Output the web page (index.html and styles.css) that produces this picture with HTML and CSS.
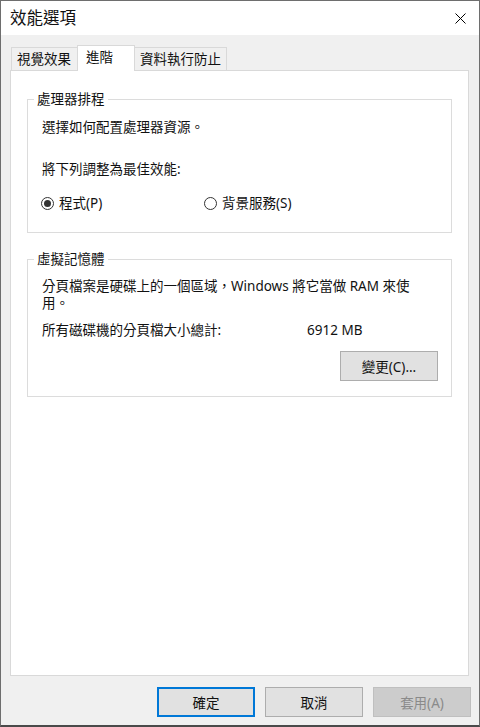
FILE: index.html
```html
<!DOCTYPE html>
<html lang="zh-TW">
<head>
    <meta charset="UTF-8">
    <meta name="viewport" content="width=device-width, initial-scale=1.0">
    <title>效能選項</title>
    <link rel="stylesheet" href="styles.css">
</head>
<body>
    <div class="window">
        <header class="titlebar">
            <div class="title">效能選項</div>
            <button class="close-btn" aria-label="關閉">
                <svg width="11" height="11" viewBox="0 0 11 11">
                    <path d="M0.5 0.5 L10.5 10.5 M10.5 0.5 L0.5 10.5" stroke="#000" stroke-width="1" fill="none"/>
                </svg>
            </button>
        </header>

        <div class="dialog-body">
            <div class="tabs">
                <div class="tab tab-first">視覺效果</div>
                <div class="tab tab-active">進階</div>
                <div class="tab tab-last">資料執行防止</div>
            </div>

            <div class="tab-panel">
                <fieldset class="group group-first">
                    <legend>處理器排程</legend>
                    <div class="group-content">
                        <p class="line intro">選擇如何配置處理器資源。</p>
                        <p class="line hint">將下列調整為最佳效能:</p>
                        <div class="radio-row">
                            <label class="radio-item radio-wide">
                                <span class="radio checked"></span>
                                <span>程式(P)</span>
                            </label>
                            <label class="radio-item">
                                <span class="radio"></span>
                                <span>背景服務(S)</span>
                            </label>
                        </div>
                    </div>
                </fieldset>

                <fieldset class="group group-memory">
                    <legend>虛擬記憶體</legend>
                    <div class="group-content">
                        <p class="paragraph">分頁檔案是硬碟上的一個區域，Windows 將它當做 RAM 來使<br>用。</p>
                        <div class="size-row">
                            <span class="size-label">所有磁碟機的分頁檔大小總計:</span>
                            <span>6912 MB</span>
                        </div>
                        <div class="change-row">
                            <button class="btn">變更(C)...</button>
                        </div>
                    </div>
                </fieldset>
            </div>

            <div class="button-row">
                <button class="btn btn-default">確定</button>
                <button class="btn">取消</button>
                <button class="btn" disabled>套用(A)</button>
            </div>
        </div>
    </div>
</body>
</html>
```

FILE: styles.css
```css
:root {
    --face: #f0f0f0;
    --edge: #d9d9d9;
    --group-edge: #dcdcdc;
    --btn-face: #e1e1e1;
    --btn-edge: #adadad;
    --accent: #0078d7;
    --text: #111111;
}

* {
    margin: 0;
    padding: 0;
    box-sizing: border-box;
}

body {
    font-family: "Noto Sans", "Noto Sans CJK TC", sans-serif;
    font-size: 13.5px;
    color: var(--text);
    background: #3c3c3c;
}

.window {
    width: 480px;
    height: 727px;
    border: 1px solid #6e6e6e;
    border-bottom: 2px solid #4a4a4a;
    background: var(--face);
    display: flex;
    flex-direction: column;
}

/* Title bar */
.titlebar {
    height: 34px;
    background: #ffffff;
    display: flex;
    align-items: center;
    justify-content: space-between;
    padding: 0 13px 0 9px;
}

.title {
    font-size: 16.5px;
    line-height: 20px;
    padding-bottom: 1px;
}

.close-btn {
    border: none;
    background: none;
    width: 11px;
    height: 11px;
    display: flex;
    margin-top: 1px;
}

/* Dialog */
.dialog-body {
    padding: 10px 10px 0 9px;
}

.tabs {
    display: flex;
    align-items: flex-end;
    padding-left: 1px;
    height: 25px;
}

.tab {
    height: 23px;
    line-height: 22px;
    padding: 0 5px;
    border: 1px solid var(--edge);
    border-bottom: none;
    background: var(--face);
    margin-left: -1px;
    white-space: nowrap;
}

.tab-first {
    margin-left: 0;
    width: 67px;
}

.tab-active {
    position: relative;
    height: 26px;
    margin-bottom: -1px;
    width: 58px;
    padding: 0 8px;
    line-height: 22px;
    background: #ffffff;
}

.tab-last {
    width: 93px;
}

.tab-panel {
    height: 606px;
    background: #ffffff;
    border: 1px solid var(--edge);
    padding: 0 16px;
}

/* Group boxes */
.group {
    border: 1px solid var(--group-edge);
    padding: 0;
    margin-top: 17px;
}

.group-first {
    margin-top: 19px;
}

.group legend {
    margin-left: 6px;
    padding: 0 3px;
    line-height: 18px;
}

.group-content {
    padding: 0 14px;
}

.line {
    line-height: 18px;
}

.intro {
    margin-top: 10px;
}

.hint {
    margin-top: 24px;
}

.radio-row {
    display: flex;
    margin-top: 16px;
    margin-left: -1px;
    line-height: 18px;
    padding-bottom: 20px;
}

.radio-item {
    display: flex;
    align-items: center;
    gap: 5px;
}

.radio-wide {
    width: 163px;
}

.radio {
    width: 13px;
    height: 13px;
    border: 1px solid #333333;
    border-radius: 50%;
    background: #ffffff;
    display: flex;
    align-items: center;
    justify-content: center;
}

.radio.checked::after {
    content: '';
    width: 7px;
    height: 7px;
    border-radius: 50%;
    background: #333333;
}

.paragraph {
    margin-top: 10px;
    line-height: 17px;
    white-space: nowrap;
}

.size-row {
    margin-top: 10px;
    line-height: 17px;
    display: flex;
}

.size-label {
    width: 265px;
}

.change-row {
    display: flex;
    justify-content: flex-end;
    margin-top: 12px;
    margin-right: -1px;
    padding-bottom: 15px;
}

/* Buttons */
.btn {
    font-family: inherit;
    font-size: 13.5px;
    color: var(--text);
    width: 98px;
    height: 30px;
    background: var(--btn-face);
    border: 1px solid var(--btn-edge);
}

.btn-default {
    border: 2px solid var(--accent);
}

.btn:disabled {
    background: #cccccc;
    border-color: #bfbfbf;
    color: #8a8a8a;
}

.button-row {
    display: flex;
    justify-content: flex-end;
    gap: 10px;
    margin-top: 11px;
    margin-right: -2px;
}
```
